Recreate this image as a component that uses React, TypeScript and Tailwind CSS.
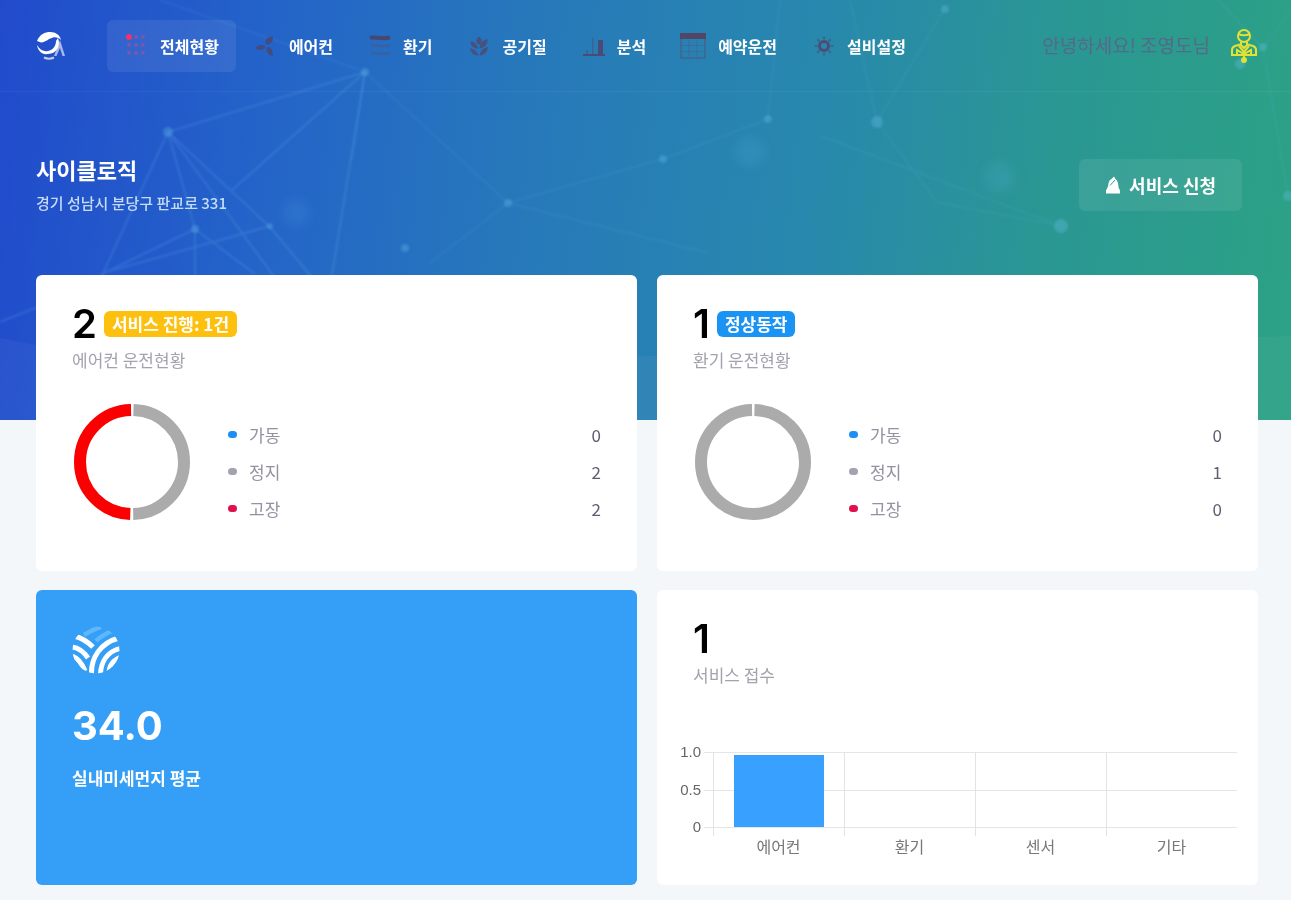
import type { ReactNode } from 'react';
import clsx from 'clsx';

type Row = { label: string; value: number; dot: string };

const NAV: { label: string; icon: ReactNode; active?: boolean }[] = [
  { label: '전체현황', icon: <DotsIcon />, active: true },
  { label: '에어컨', icon: <FanIcon /> },
  { label: '환기', icon: <WindIcon /> },
  { label: '공기질', icon: <PlantIcon /> },
  { label: '분석', icon: <BarsIcon /> },
  { label: '예약운전', icon: <CalendarIcon /> },
  { label: '설비설정', icon: <GearIcon /> },
];

const AIRCON: Row[] = [
  { label: '가동', value: 0, dot: 'bg-[#1b90f2]' },
  { label: '정지', value: 2, dot: 'bg-[#a3a3b0]' },
  { label: '고장', value: 2, dot: 'bg-[#e0104f]' },
];

const VENT: Row[] = [
  { label: '가동', value: 0, dot: 'bg-[#1b90f2]' },
  { label: '정지', value: 1, dot: 'bg-[#a3a3b0]' },
  { label: '고장', value: 0, dot: 'bg-[#e0104f]' },
];

const REQUESTS = [
  { label: '에어컨', value: 1 },
  { label: '환기', value: 0 },
  { label: '센서', value: 0 },
  { label: '기타', value: 0 },
];

function DotsIcon() {
  return (
    <svg viewBox="0 0 24 24" className="size-6 shrink-0" fill="#7a58aa">
      <circle cx="5" cy="3" r="3" fill="#f0336a" />
      {[[12, 3], [19, 3], [5, 11], [12, 11], [19, 11], [5, 19], [12, 19], [19, 19]].map(([x, y]) => (
        <circle key={`${x}-${y}`} cx={x} cy={y} r="2" />
      ))}
    </svg>
  );
}

function FanIcon() {
  return (
    <svg viewBox="0 0 24 24" className="size-6 shrink-0" fill="#454b7c">
      <path d="M12.500 9C12 5 15 2.500 19.500 2.500 21 6 18.500 9.500 14.500 11Z" />
      <path d="M11.500 12C8 10 4 11 3 14.500 5.500 16.500 9 16.500 12 14Z" />
      <path d="M15 13C18 13.500 20.500 17 19.500 22 16 22 13.500 18 13.500 14.500Z" />
    </svg>
  );
}

function WindIcon() {
  return (
    <svg viewBox="0 0 24 24" className="size-6 shrink-0" fill="none">
      <path d="M3 4C8 2 13 6 23 3.500" stroke="#48476f" strokeWidth="4" />
      <path d="M4 12c5-1.500 9 1.500 19-.5" stroke="#3a609f" strokeWidth="2.500" />
      <path d="M4 19.500c5-1.500 9 1.500 19-.5" stroke="#3a609f" strokeWidth="2.500" />
    </svg>
  );
}

function PlantIcon() {
  return (
    <svg viewBox="0 0 24 24" className="size-6 shrink-0" fill="#47517e">
      <path d="M12 2.500c3 2 4 5 0 8.500-4-3.500-3-6.500 0-8.500Z" />
      <path d="M3.500 7.500c4 0 7 3 7.500 7-4.500 0-7.500-2.500-7.500-7Z" />
      <path d="M20.500 5c-4.500 1-8 4-8 9.500C17.500 14 21 10.500 20.500 5Z" />
      <path d="M3 14c3.500 1 6.500 2.500 8.500 7.500C6.500 21.500 3.500 18.500 3 14Z" />
      <path d="M21 13c-4 .8-7.500 3-8.500 8.500C17.500 21 20.500 18 21 13Z" />
    </svg>
  );
}

function BarsIcon() {
  return (
    <svg viewBox="0 0 24 24" className="size-6 shrink-0">
      <path d="M5 16h2v5H5zM11 4h1.500v17H11z" fill="#3c6294" />
      <path d="M17 6h5v15h-5z" fill="#4a4a76" />
      <path d="M2 21h22" stroke="#4a4a76" strokeWidth="2" />
    </svg>
  );
}

function CalendarIcon() {
  return (
    <svg viewBox="0 0 26 26" className="size-[26px] shrink-0" fill="none" stroke="#41658f">
      <path d="M1 3h24v22H1z" strokeWidth="1.500" />
      <path d="M9 7v17M17 7v17M1 12.500h24M1 18.500h24" strokeWidth="1" opacity="0.700" />
      <path d="M0 0h26v6H0z" fill="#514668" stroke="none" />
    </svg>
  );
}

function GearIcon() {
  return (
    <svg viewBox="0 0 24 24" className="size-6 shrink-0" fill="none" stroke="#4b4d74">
      <circle cx="13" cy="12" r="4.500" strokeWidth="3" />
      <path
        d="M13 2.500v3M13 18.500v3M3.500 12h3M19.500 12h3M6.300 5.300l2.200 2.200M17.500 16.500l2.200 2.200M6.300 18.700l2.200-2.200M17.500 7.500l2.200-2.200"
        strokeWidth="2"
        opacity="0.600"
      />
    </svg>
  );
}

function Logo() {
  return (
    <svg viewBox="0 0 30 30" className="h-[30px] w-[30px]">
      <path d="M1 10C4 3 9 1 14 1c6 0 10 3 11 8-2-2-5-3-8-2.500C12 8 10 11 5 11.500Z" fill="#fff" />
      <path d="M1 14c3 5 7 7 11 6 5-1 8-5 8-10l2-3c3 7-1 16-10 16C6 24 2 20 1 14Z" fill="#fff" />
      <path d="M18 25 24 9l5 16h-2.500L24 17l-3.500 8Z" fill="#fff" opacity="0.600" />
      <path d="M8 26.500c3 1.500 7 1.500 10 0" fill="none" stroke="#c9cfd8" strokeWidth="2" />
    </svg>
  );
}

function UserIcon() {
  return (
    <svg viewBox="0 0 28 36" className="h-9 w-7" fill="none" stroke="#e3e132" strokeWidth="2">
      <circle cx="14" cy="8" r="6" />
      <path d="M8.500 6c3 1.500 8 1.500 11 0" />
      <path d="M11 14v3l3 3 3-3v-3" />
      <path d="M10 16.500 5 18c-2 .7-3 2-3 4v5h24v-5c0-2-1-3.300-3-4l-5-1.500" />
      <path d="M7 27v-5l7 4 7-4v5M9 18l5 6 5-6" />
      <path d="M14 27v3" />
      <circle cx="14" cy="32" r="3" fill="#e3e132" stroke="none" />
    </svg>
  );
}

function BellIcon() {
  return (
    <svg viewBox="0 0 16 20" className="h-5 w-4" fill="#fff">
      <path d="M9 1.500 10.500 4c2.500 2 3 6 3 8.500l1.500 3v3H1v-3l2-4C3.500 8 4 5 6.500 4Z" />
      <path d="M5 10.500 10 5" stroke="#36a09a" strokeWidth="1" />
    </svg>
  );
}

function DustIcon() {
  return (
    <svg viewBox="0 0 48 48" className="size-12" fill="none" strokeWidth="5">
      <clipPath id="dust">
        <circle cx="24" cy="24" r="23.500" />
      </clipPath>
      <g clipPath="url(#dust)">
        <path d="M12 9C17 6 21 3 29 1M24 15c4-4 9-7 16-10" stroke="#5cb8fa" strokeWidth="4.500" />
        <g stroke="#fff">
          <path d="M2 10c8 2 14 6 19 11" />
          <path d="M0 21c7 1 12 5 16 11" />
          <path d="M0 30c6 2 10 7 13 15" />
          <path d="M19.500 48C19 32 28 17 47 12" />
          <path d="M28.500 48C29 36 35 25 50 22" />
          <path d="M37 48c0-8 4-14 12-17" />
        </g>
      </g>
    </svg>
  );
}

// faint network of dots and lines behind the header
function BannerArt() {
  return (
    <svg
      viewBox="0 0 1291 420"
      preserveAspectRatio="xMidYMin slice"
      className="h-full w-full"
      fill="none"
      stroke="#6fc0f5"
      strokeWidth="2"
      aria-hidden="true"
    >
      <filter id="soft">
        <feGaussianBlur stdDeviation="1" />
      </filter>
      <filter id="glow">
        <feGaussianBlur stdDeviation="6" />
      </filter>
      <g opacity="0.180" filter="url(#soft)">
        <path d="M365 72 168 132 100 280M168 132l27 97M168 132l102 95 50 60M168 132l110 150" />
        <path d="M195 229 100 275M195 229v60M195 229l60 45M270 226l-160 45M0 322l40-16" />
        <path d="M365 72 232 190M365 72l-35 215" />
      </g>
      <g opacity="0.090" filter="url(#soft)">
        <path d="M365 72 352 160M365 72l143 131 155-44 105-40 12-119M508 203l-78 60M160 0l200 70" />
        <path d="M945 8 877 122l60 80 124 24M877 122 850 0M508 203l200 50" />
        <path d="M1263 48l25 148M1263 48 1291 10M1263 48l-23 16M1263 48l-45-48M1061 226l-240-90" />
      </g>
      <g fill="#6cc4f0" stroke="none" filter="url(#soft)">
        {[[365, 72, 4], [168, 132, 5], [195, 229, 4], [270, 226, 3], [508, 203, 4], [663, 159, 4], [768, 119, 4], [877, 122, 6], [945, 9, 4], [1061, 226, 7], [1263, 47, 4], [1288, 196, 5], [1240, 64, 5], [405, 248, 4]].map(
          ([x, y, r]) => (
            <circle key={x} cx={x} cy={y} r={r} opacity="0.300" />
          )
        )}
      </g>
      <g fill="#6cc4f0" stroke="none" filter="url(#glow)" opacity="0.130">
        <circle cx="296" cy="213" r="13" />
        <circle cx="750" cy="152" r="15" />
        <circle cx="1000" cy="177" r="16" />
      </g>
      <path d="M0 338 36 345 660 356 1291 336V420H0Z" fill="#fff" stroke="none" opacity="0.040" />
    </svg>
  );
}

function Donut({ gray, red }: { gray: number; red: number }) {
  const total = gray + red;
  const c = 2 * Math.PI * 52;
  const arcs = [
    { share: gray / total, start: 0, color: '#ababab' },
    { share: red / total, start: gray / total, color: '#fb0000' },
  ].filter((a) => a.share > 0);
  return (
    <svg viewBox="0 0 120 120" className="size-[120px] shrink-0" fill="none" strokeWidth="12">
      {arcs.map((a) => (
        <circle
          key={a.color}
          cx="60"
          cy="60"
          r="52"
          stroke={a.color}
          strokeDasharray={`${c * a.share - 3} ${c}`}
          strokeDashoffset={-(c * a.start + 1.5)}
          transform="rotate(-90 60 60)"
        />
      ))}
    </svg>
  );
}

function CardHead({ count, title, badge }: { count: number; title: string; badge?: ReactNode }) {
  return (
    <>
      <div className="flex h-[42px] items-center gap-[7px]">
        <span className="font-[Inter,sans-serif] text-[40px] leading-10 font-semibold text-black">{count}</span>
        {badge}
      </div>
      <h2 className="mt-[3px] text-[17px] leading-6 text-[#a3a3ae]">{title}</h2>
    </>
  );
}

function StatusCard({ count, title, badge, rows }: { count: number; title: string; badge: ReactNode; rows: Row[] }) {
  return (
    <section className="min-h-[296px] rounded-md bg-white px-9 pt-7">
      <CardHead count={count} title={title} badge={badge} />
      <div className="mt-[30px] flex items-start">
        <Donut gray={rows[1].value} red={rows[2].value} />
        <dl className="mt-[14px] ml-9 flex-1 text-[17px]">
          {rows.map((r) => (
            <div key={r.label} className="flex h-[37px] items-center gap-3">
              <span className={clsx('h-[7px] w-[9px] rounded-full', r.dot)} />
              <dt className="flex-1 text-[#9292a2]">{r.label}</dt>
              <dd className="text-[#5e5e72]">{r.value}</dd>
            </div>
          ))}
        </dl>
      </div>
    </section>
  );
}

function RequestChart() {
  return (
    <div className="mt-[65px] flex">
      <div className="flex h-[76px] w-[34px] flex-col justify-between font-['Liberation_Sans',sans-serif] text-[15px] text-[#666]">
        {['1.0', '0.5', '0'].map((t) => (
          <div key={t} className="flex h-px items-center justify-end gap-[3px]">
            <span>{t}</span>
            <span className="h-px w-[9px] bg-[#e5e5e5]" />
          </div>
        ))}
      </div>
      <div className="grid flex-1 grid-cols-4">
        {REQUESTS.map((r) => (
          <div key={r.label}>
            <div className="h-[84px] border-l border-[#e3e3e3]">
              <div className="flex h-[76px] items-end justify-center border-t border-b border-[#e5e5e5] bg-[linear-gradient(#e5e5e5,#e5e5e5)] bg-[length:100%_1px] bg-center bg-no-repeat">
                {r.value > 0 && <div className="w-[69%] bg-[#38a0ff]" style={{ height: `${r.value * 97}%` }} />}
              </div>
            </div>
            <p className="text-center text-base leading-5 text-[#77777c]">{r.label}</p>
          </div>
        ))}
      </div>
    </div>
  );
}

export default function App() {
  return (
    <div className="relative min-h-screen bg-[#f3f7f9] font-['Noto_Sans_CJK_KR',sans-serif]">
      <div className="absolute inset-x-0 top-0 h-[420px] bg-[linear-gradient(96deg,#214bcc_0%,#2465c8_22%,#277ab9_42%,#2888ad_62%,#2a9793_80%,#2ca285_100%)]">
        <BannerArt />
      </div>

      <div className="relative pb-[15px]">
        <header className="flex h-[92px] items-center border-b border-white/5 pr-[33px] pl-9">
          <a href="#home" aria-label="홈">
            <Logo />
          </a>
          <nav className="ml-[41px] flex">
            {NAV.map((n) => (
              <a
                key={n.label}
                href="#menu"
                className={clsx(
                  'flex h-[52px] items-center gap-3 rounded-md px-[17px] text-base font-bold whitespace-nowrap text-white',
                  n.active && 'bg-white/8'
                )}
              >
                {n.icon}
                {n.label}
              </a>
            ))}
          </nav>
          <p className="ml-auto text-[19px] whitespace-nowrap text-[#546a88]">안녕하세요! 조영도님</p>
          <button type="button" aria-label="사용자" className="ml-5">
            <UserIcon />
          </button>
        </header>

        <div className="flex items-center justify-between pt-[63px] pr-[49px] pb-[60px] pl-9 text-white">
          <div>
            <h1 className="text-[22px] leading-7 font-bold">사이클로직</h1>
            <p className="mt-2 text-[15px] leading-6 font-medium text-[#c6dcf6]">경기 성남시 분당구 판교로 331</p>
          </div>
          <button type="button" className="flex h-[52px] items-center gap-2 rounded-md bg-white/8 px-[26px] text-[18px] font-bold">
            <BellIcon />
            서비스 신청
          </button>
        </div>

        <main className="grid grid-cols-2 gap-x-5 gap-y-[19px] pr-[33px] pl-9">
          <StatusCard
            count={2}
            title="에어컨 운전현황"
            rows={AIRCON}
            badge={
              <span className="rounded-md bg-[#fdc00f] px-2 text-[17px] leading-[26px] font-bold text-white">서비스 진행: 1건</span>
            }
          />
          <StatusCard
            count={1}
            title="환기 운전현황"
            rows={VENT}
            badge={<span className="rounded-md bg-[#1b93f3] px-2 text-[17px] leading-[26px] font-bold text-white">정상동작</span>}
          />
          <section className="rounded-md bg-[#359ef6] px-9 pt-9 pb-8 text-white">
            <DustIcon />
            <p className="mt-8 font-[Inter,sans-serif] text-[40px] leading-10 font-bold">34.0</p>
            <h2 className="mt-5 text-[17px] leading-6 font-bold">실내미세먼지 평균</h2>
          </section>
          <section className="min-h-[295px] rounded-md bg-white pt-7">
            <div className="px-9">
              <CardHead count={1} title="서비스 접수" />
            </div>
            <div className="pr-[21px] pl-[22px]">
              <RequestChart />
            </div>
          </section>
        </main>
      </div>
    </div>
  );
}
